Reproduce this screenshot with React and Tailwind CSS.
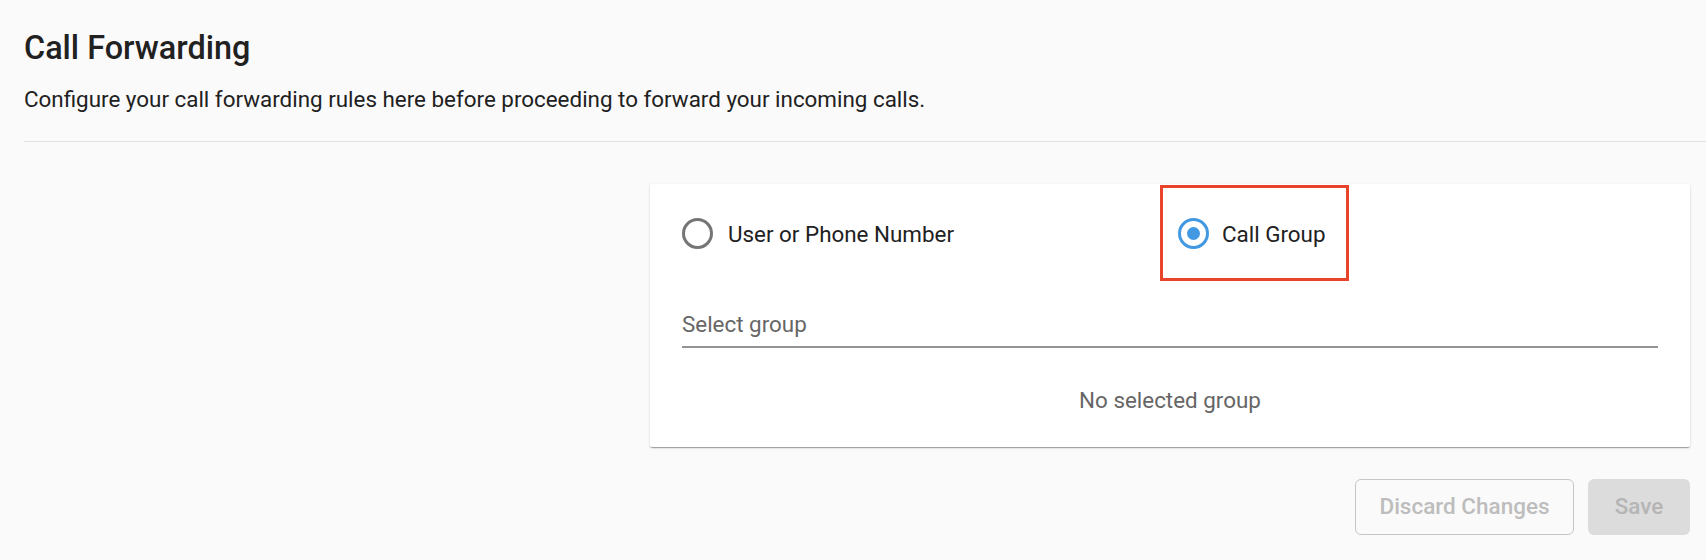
import { useState } from 'react';

function Radio({ checked }) {
  return (
    <span
      className={
        'flex items-center justify-center w-[31px] h-[31px] rounded-full border-[3px] shrink-0 ' +
        (checked ? 'border-[#4299e1]' : 'border-[#757575]')
      }
    >
      {checked && <span className="w-[13px] h-[13px] rounded-full bg-[#4299e1]" />}
    </span>
  );
}

function App() {
  const [mode, setMode] = useState('group');

  return (
    <div className="min-h-screen bg-[#fafafa] text-[#212121] font-['Roboto',sans-serif]">
      <div className="pl-6 pt-[29px]">
        <h1 className="text-[32.4px] leading-[38px] font-medium">Call Forwarding</h1>
        <p className="mt-[19px] text-[22.4px] leading-[26px]">
          Configure your call forwarding rules here before proceeding to forward your incoming calls.
        </p>
        <div className="mt-[29px] h-px bg-[#e0e0e0]" />
      </div>

      <div className="flex justify-end pr-4 pt-[42px]">
        <div className="w-[1040px]">
          <div className="bg-white rounded-[2px] px-8 pt-[18px] pb-[34px] shadow-[0_2px_1px_-1px_rgba(0,0,0,0.2),0_1px_1px_0_rgba(0,0,0,0.14),0_1px_3px_0_rgba(0,0,0,0.12)]">
            <div className="flex h-[63px] items-center">
              <label
                className="flex w-[496px] items-center gap-[15px] cursor-pointer"
                onClick={() => setMode('user')}
              >
                <Radio checked={mode === 'user'} />
                <span className="text-[22.4px] leading-[26px]">User or Phone Number</span>
              </label>
              <label
                className="relative flex items-center gap-[13px] cursor-pointer"
                onClick={() => setMode('group')}
              >
                <Radio checked={mode === 'group'} />
                <span className="text-[22.4px] leading-[26px]">Call Group</span>
                {/* annotation box */}
                <span className="absolute -left-[18px] -top-[33px] w-[189px] h-[96px] border-[3px] border-[#e8432b] pointer-events-none" />
              </label>
            </div>

            <div className="mt-[46px] pb-[9px] border-b-2 border-[#949494] text-[22.4px] leading-[26px] text-[#666666]">
              Select group
            </div>

            <p className="mt-[39px] text-center text-[22.4px] leading-[26px] text-[#666666]">
              No selected group
            </p>
          </div>

          <div className="mt-[32px] flex justify-end gap-[14px]">
            <button
              disabled
              className="w-[219px] h-[56px] rounded-[6px] border border-[#c6c6c6] text-[22.5px] font-medium text-[#bdbdbd]"
            >
              Discard Changes
            </button>
            <button
              disabled
              className="w-[102px] h-[56px] rounded-[6px] bg-[#dcdcdc] text-[22.5px] font-medium text-[#b5b5b5]"
            >
              Save
            </button>
          </div>
        </div>
      </div>
    </div>
  );
}

export default App;
